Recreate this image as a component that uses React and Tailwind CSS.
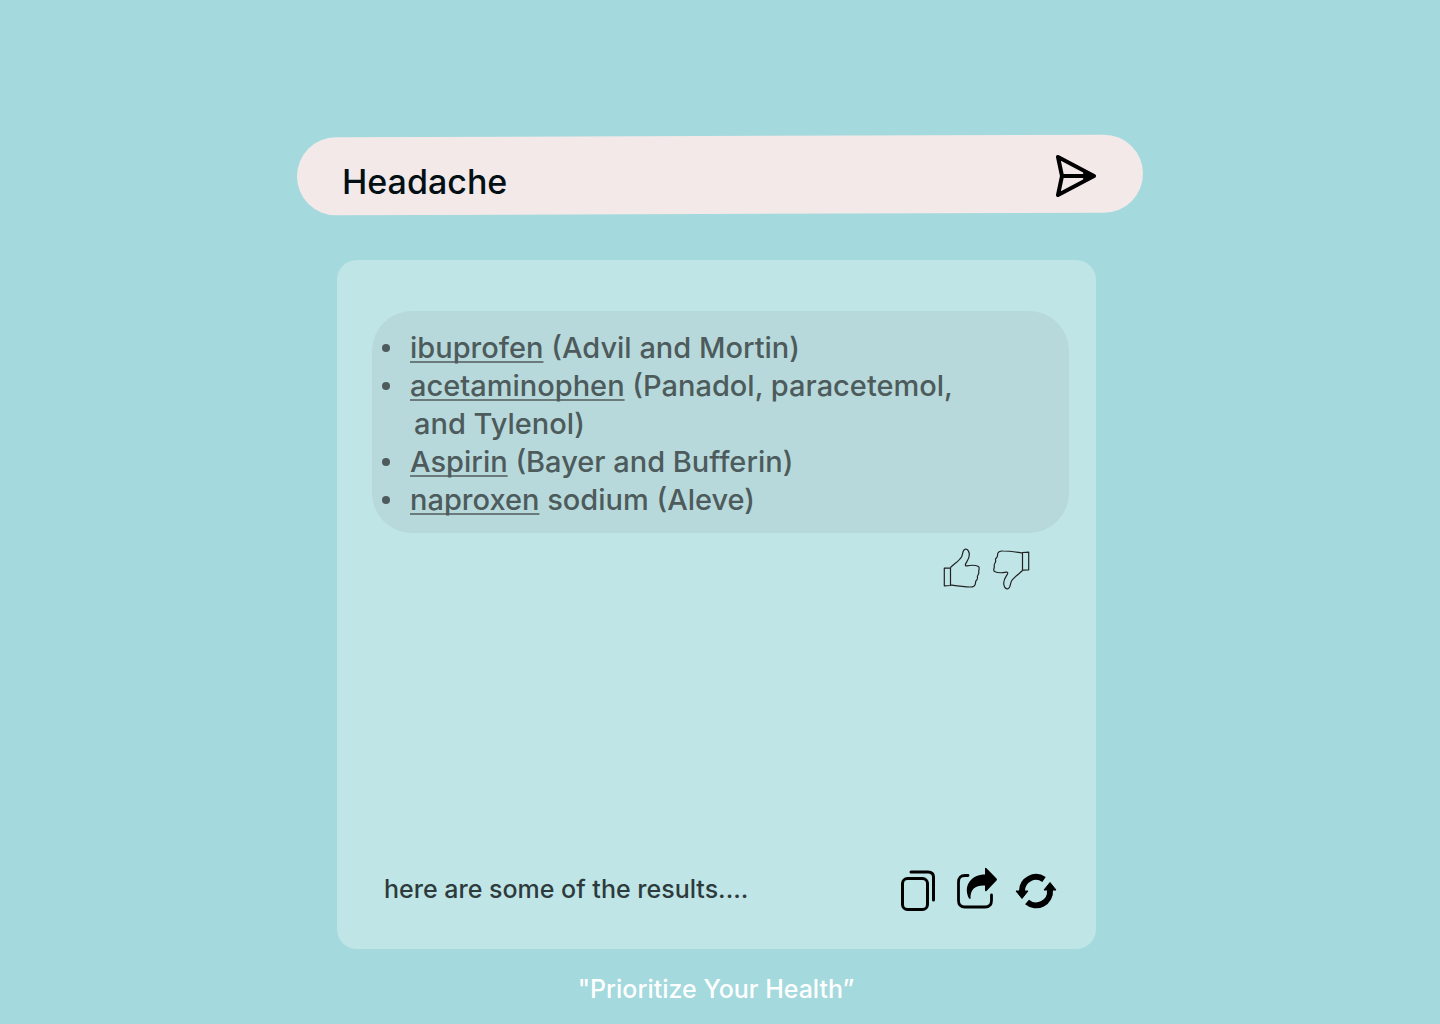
import React from "react";

const results = [
  { name: "ibuprofen", note: "(Advil and Mortin)" },
  { name: "acetaminophen", note: "(Panadol, paracetemol,", more: "and Tylenol)" },
  { name: "Aspirin", note: "(Bayer and Bufferin)" },
  { name: "naproxen", note: "sodium (Aleve)" },
];

function SendIcon() {
  return (
    <svg className="h-11 w-11" viewBox="0 0 44 44" fill="none" stroke="currentColor" strokeWidth="4" strokeLinejoin="round" strokeLinecap="round" aria-hidden="true">
      <path d="M4 4 40 23 4 42 8 23ZM8 23H39" />
      <path d="M30 20 39 23 30 26" strokeWidth="2" fill="currentColor" />
    </svg>
  );
}

function ThumbIcon({ down = false }) {
  return (
    <svg className={down ? "h-11 w-10 rotate-180" : "h-11 w-10"} viewBox="0 0 40 44" fill="none" stroke="#222" strokeWidth="1.2" strokeLinejoin="round" aria-hidden="true">
      <path d="M2.3 21.2 8.5 20.8V38.5L2.3 38.8ZM8.500 20.500C12 17 17 14 19.500 10C21 7 20.500 2.500 23.500 2.200C26 2 27.300 5 27.300 8C27.300 12 24.500 15 23.500 17C23 18.500 23.500 19 25 18.800C29 18 34 18.300 36.500 19.500C38.500 21 36 23 36.800 25.500C37 28 34.500 28.500 35.500 31C36 33 33 33 33.500 36C33.500 39 31 40.200 28 40C21 40 15 39 8.500 38" />
    </svg>
  );
}

function CopyIcon() {
  return (
    <svg className="h-11 w-9" viewBox="0 0 36 44" fill="none" stroke="currentColor" strokeWidth="3" strokeLinecap="round" aria-hidden="true">
      <rect x="2.5" y="11.5" width="25" height="31" rx="5" />
      <path d="M11 5H28Q33.5 5 33.5 10V33" />
    </svg>
  );
}

function ShareIcon() {
  return (
    <svg className="h-11 w-11" viewBox="0 0 44 44" aria-hidden="true">
      <path d="M13 8.500H10Q3.500 8.500 3.500 15V33.500Q3.500 40 10 40H30Q36.500 40 36.500 33.500V28" fill="none" stroke="currentColor" strokeWidth="2.800" strokeLinecap="round" />
      <path d="M30 1.5Q30 0 31.500 1.200L41.500 11.500Q42.500 12.500 41.500 13.500L31.500 24Q30 25 30 23V18.500C21 18 15 21.500 15.500 32L14 31.500C7.500 18 17 7.500 30 7.500Z" fill="currentColor" />
    </svg>
  );
}

function RefreshIcon() {
  return (
    <svg className="h-11 w-11" viewBox="0 0 44 44" aria-hidden="true">
      <g fill="none" stroke="currentColor" strokeWidth="6">
        <path d="M30 12.500A14 14 0 0 0 8 24" />
        <path d="M13 35A14 14 0 0 0 36 23" />
      </g>
      <path d="M2 24H14L8 31.500ZM30 23H42L36 15.500Z" fill="currentColor" stroke="currentColor" strokeWidth="1" strokeLinejoin="round" />
    </svg>
  );
}

export default function App() {
  return (
    <main className="flex min-h-screen flex-col items-center bg-[#a4d9dd] px-4 pt-[136px] font-['Inter',sans-serif] font-medium">
      <div className="w-full max-w-[846px]">
        <form className="relative isolate flex items-center gap-4 py-[17px] pl-[45px] pr-[45px]" onSubmit={(e) => e.preventDefault()}>
          <span className="absolute inset-0 -z-10 -rotate-[0.2deg] rounded-full bg-[#f3e9e8]" />
          <input aria-label="Symptom" defaultValue="Headache" className="h-11 min-w-0 flex-1 bg-transparent pt-3 text-[34px] text-[#021016] outline-none" />
          <button type="submit" aria-label="Send" className="text-black">
            <SendIcon />
          </button>
        </form>

        <section className="ml-10 mr-[47px] mt-[46px] flex min-h-[689px] flex-col rounded-[20px] bg-[#bfe5e7] pb-[38px] pl-[35px] pr-[27px] pt-[51px]">
          <ul className="rounded-[40px] bg-[#b8d9db] pb-3.5 pl-[10px] pr-8 pt-[18px] text-[29px] leading-[38px] text-[#4d5b5c]">
            {results.map((item) => (
              <li key={item.name} className="flex gap-5">
                <span aria-hidden="true" className="mt-[15px] h-2 w-2 shrink-0 rounded-full bg-[#4d5b5c]" />
                <div>
                  <a href="#" className="underline decoration-[#6b7b7c] decoration-2 underline-offset-3 [text-decoration-skip-ink:none]">{item.name}</a> {item.note}
                  {item.more && <p className="pl-1">{item.more}</p>}
                </div>
              </li>
            ))}
          </ul>
          <div className="mr-[38px] mt-3.5 flex justify-end gap-[9px]">
            <button type="button" aria-label="Good result"><ThumbIcon /></button>
            <button type="button" aria-label="Bad result"><ThumbIcon down /></button>
          </div>
          <div className="mt-auto flex items-center justify-between pl-3 pr-[11px]">
            <p className="text-[25px] leading-8 text-[#2e3b3c]">here are some of the results....</p>
            <div className="flex text-black">
              <button type="button" aria-label="Copy" className="mr-[19px]"><CopyIcon /></button>
              <button type="button" aria-label="Share" className="mr-[15px]"><ShareIcon /></button>
              <button type="button" aria-label="Refresh"><RefreshIcon /></button>
            </div>
          </div>
        </section>
        <p className="mr-2 mt-6 text-center text-[25px] leading-8 text-white">"Prioritize Your Health”</p>
      </div>
    </main>
  );
}
